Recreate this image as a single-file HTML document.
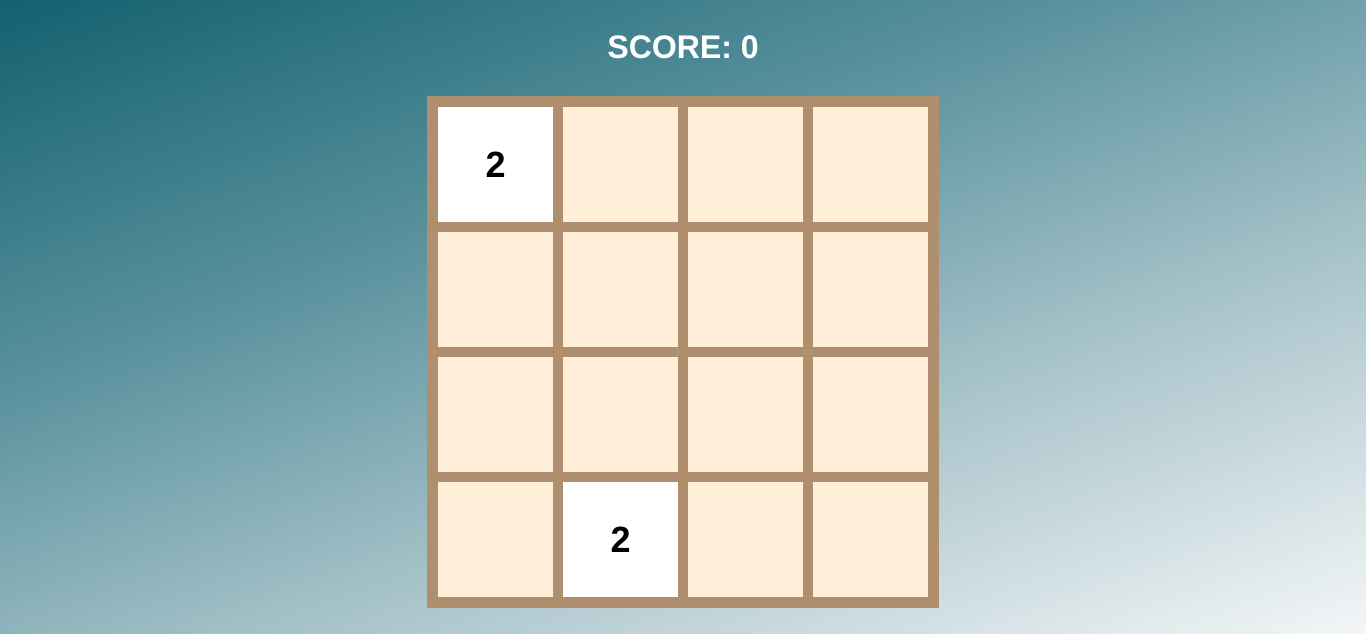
<!DOCTYPE html>
<html><head><style>
html,body{margin:0;padding:0;width:1366px;height:634px;overflow:hidden}
body{background:linear-gradient(160deg,#13606f 0%,#5a929e 35%,#a6c2c9 65%,#f3f6f7 100%);font-family:"Liberation Sans",sans-serif}
h1{position:absolute;top:29px;left:0;width:1366px;margin:0;text-align:center;color:#fff;font-size:32px;font-weight:bold;line-height:36px}
.board{position:absolute;left:427px;top:96px;width:490px;height:490px;padding:11px;background:#b08f6f;display:grid;grid-template-columns:repeat(4,115px);grid-template-rows:repeat(4,115px);gap:10px}
.c{background:#ffefd8;display:flex;align-items:center;justify-content:center;font-size:36px;font-weight:bold;color:#000}
.w{background:#fff}
</style></head><body>
<h1>SCORE: 0</h1>
<div class="board">
<div class="c w">2</div><div class="c"></div><div class="c"></div><div class="c"></div>
<div class="c"></div><div class="c"></div><div class="c"></div><div class="c"></div>
<div class="c"></div><div class="c"></div><div class="c"></div><div class="c"></div>
<div class="c"></div><div class="c w">2</div><div class="c"></div><div class="c"></div>
</div>
</body></html>
